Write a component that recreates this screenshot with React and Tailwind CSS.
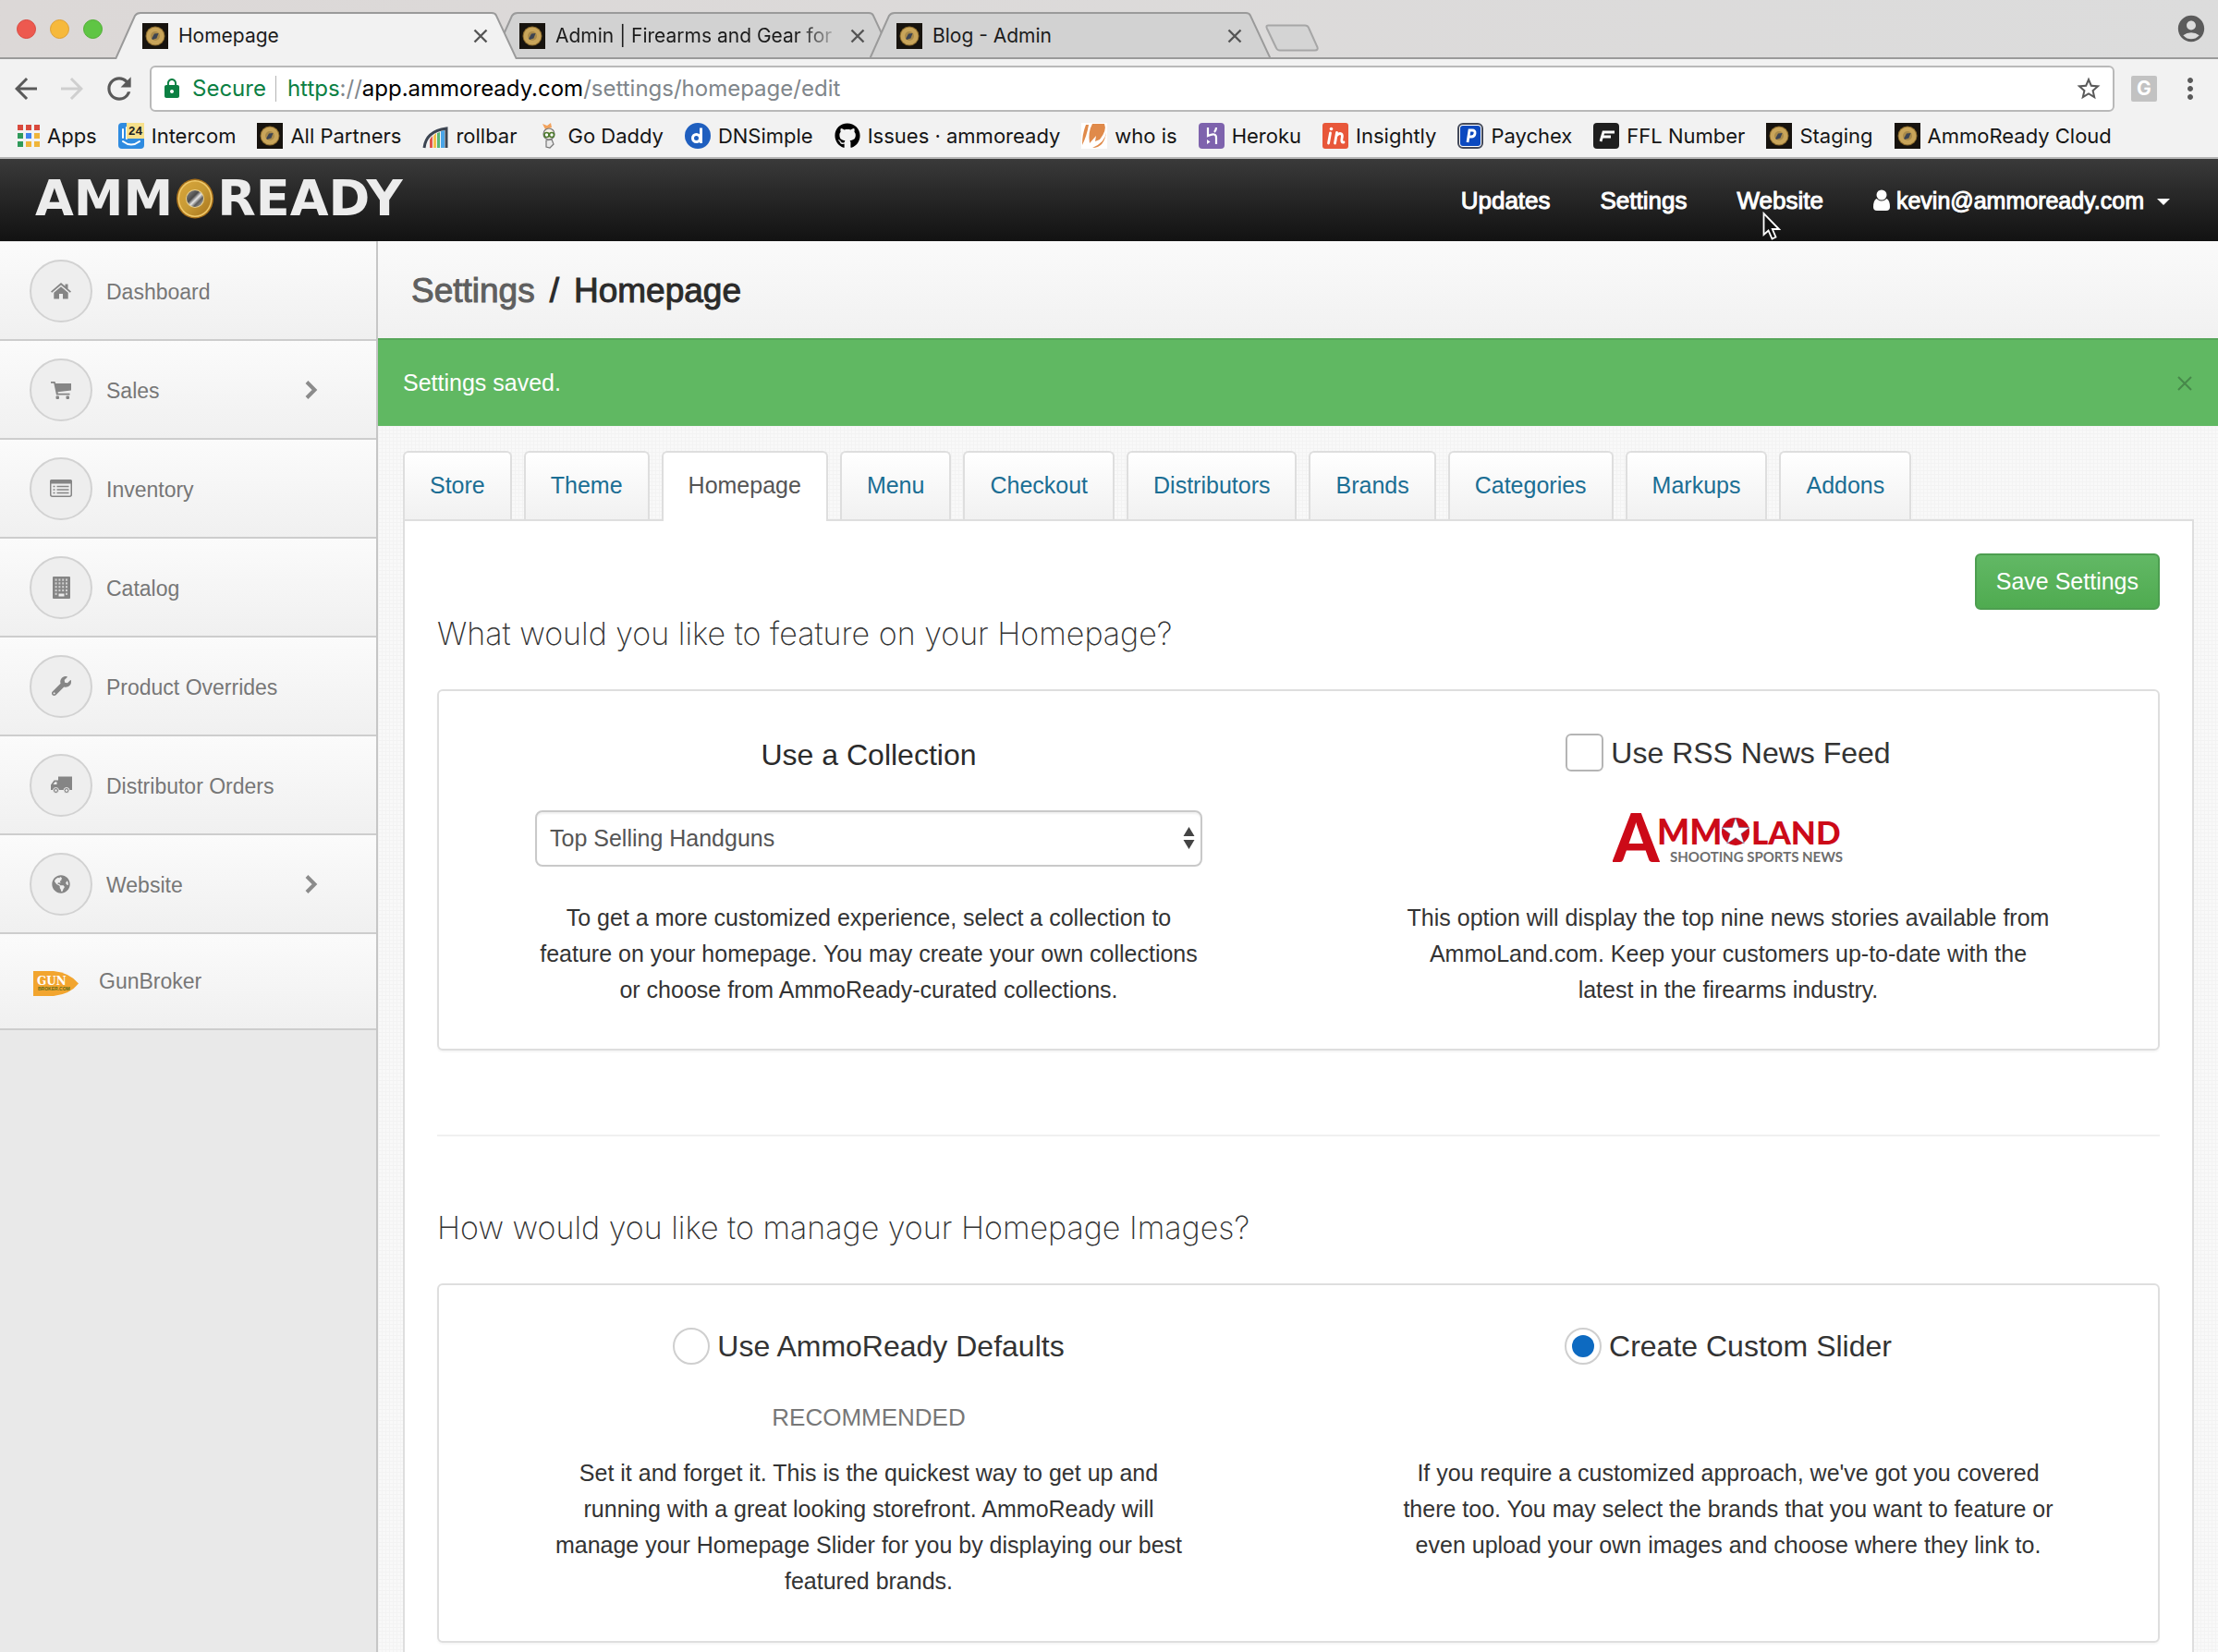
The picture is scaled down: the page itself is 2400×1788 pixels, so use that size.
import React from "react";
import {
  MdArrowBack,
  MdArrowForward,
  MdRefresh,
  MdLock,
  MdStarBorder,
  MdMoreVert,
  MdAccountCircle,
} from "react-icons/md";
import { FaGithub, FaWrench, FaGlobeAmericas } from "react-icons/fa";

/* ---------- shared drawings ---------- */

function Coin({ className }) {
  return (
    <svg viewBox="0 0 40 44" className={className} aria-hidden="true">
      <defs>
        <linearGradient id="gold" x1="0" y1="0" x2="1" y2="1">
          <stop offset="0" stopColor="#d9a53a" />
          <stop offset="0.5" stopColor="#c79a35" />
          <stop offset="1" stopColor="#a8741c" />
        </linearGradient>
        <linearGradient id="steel" x1="0" y1="0" x2="1" y2="1">
          <stop offset="0" stopColor="#8d8d8d" />
          <stop offset="0.4" stopColor="#4a4a4a" />
          <stop offset="0.55" stopColor="#e6e6e6" />
          <stop offset="0.7" stopColor="#5a5a5a" />
          <stop offset="1" stopColor="#c9c9c9" />
        </linearGradient>
      </defs>
      <ellipse cx="20" cy="22" rx="20" ry="21.5" fill="#a8701a" />
      <ellipse cx="20" cy="22" rx="18.5" ry="20" fill="#f0c96a" />
      <ellipse cx="20" cy="22" rx="17" ry="18.5" fill="url(#gold)" />
      <circle cx="20" cy="22" r="10" fill="#e8cf8f" />
      <circle cx="20" cy="22" r="9" fill="url(#steel)" />
    </svg>
  );
}

function CoinFavicon() {
  return (
    <svg viewBox="0 0 28 28" className="size-7 shrink-0" aria-hidden="true">
      <rect width="28" height="28" fill="#17130e" />
      <circle cx="14" cy="14" r="10.5" fill="#8a6a2c" />
      <circle cx="14" cy="14" r="9.5" fill="#c9a55a" />
      <circle cx="14" cy="14" r="5" fill="#a98a4a" />
      <path d="M10.2 16.6 L13 11.6 L17.6 11 L15.4 16.4 L11 18 Z" fill="#3d4452" />
    </svg>
  );
}

/* ---------- browser chrome ---------- */

function BrowserTab({ title, active, overlap, fade }) {
  return (
    <div
      className={
        "relative flex h-[51px] w-[434px] shrink-0 items-center pr-[31px] pl-[29px] " +
        (active ? "z-10 " : "z-0 ") +
        (overlap ? "-ml-[26px]" : "")
      }
    >
      <svg
        viewBox="0 0 434 51"
        preserveAspectRatio="none"
        className="absolute inset-0 size-full"
        aria-hidden="true"
      >
        <path
          d="M0 51 L21 4 Q23 1 27 1 L407 1 Q411 1 412 4 L434 51"
          fill={active ? "#f2f2f2" : "#d2d2d2"}
          stroke="#9a9a9a"
          strokeWidth="2"
        />
        {active ? null : <path d="M0 50 H434" stroke="#9a9a9a" strokeWidth="2" />}
      </svg>
      <button type="button" className="relative flex flex-1 items-center gap-[11px] text-left">
        <CoinFavicon />
        <span
          className={
            "flex-1 whitespace-nowrap text-[21px] leading-7 text-[#1c1c1c] " +
            (fade ? "[mask-image:linear-gradient(90deg,#000_85%,transparent)]" : "")
          }
        >
          {title}
        </span>
      </button>
      <button type="button" aria-label={"Close " + title} className="relative ml-2 size-4 shrink-0">
        <svg viewBox="0 0 16 16" className="size-4">
          <path d="M1.5 1.5 L14.5 14.5 M14.5 1.5 L1.5 14.5" stroke="#555" strokeWidth="2.4" />
        </svg>
      </button>
    </div>
  );
}

function TabStrip() {
  return (
    <div className="flex h-16 items-end border-b-2 border-[#9a9a9a] bg-gradient-to-r from-[#dcd8d7] to-[#dcdcdc]">
      <div className="flex h-full w-[125px] shrink-0 items-center gap-[15px] pl-[18px]">
        <button type="button" aria-label="Close window" className="size-[21px] rounded-full border border-[#d9473f] bg-[#ed594f]" />
        <button type="button" aria-label="Minimize window" className="size-[21px] rounded-full border border-[#dfa033] bg-[#f6b93c]" />
        <button type="button" aria-label="Zoom window" className="size-[21px] rounded-full border border-[#4fae33] bg-[#5fc544]" />
      </div>
      <div className="-mb-[2px] flex">
        <BrowserTab title="Homepage" active />
        <BrowserTab title="Admin | Firearms and Gear for" overlap fade />
        <BrowserTab title="Blog - Admin" overlap />
      </div>
      <button type="button" aria-label="New tab" className="-ml-[6px] mb-[6px] h-[30px] w-[60px] shrink-0">
        <svg viewBox="0 0 60 30" className="h-[30px] w-[60px]">
          <path
            d="M3 1.5 H43 Q46 1.5 47 4 L56.5 25 Q57.5 28.5 54 28.5 H16 Q13 28.5 12 26 L2 5 Q0.500 1.500 3 1.500 Z"
            fill="#d4d4d4"
            stroke="#a6a6a6"
            strokeWidth="2"
          />
        </svg>
      </button>
      <div className="flex h-full flex-1 items-center justify-end pr-[12px]">
        <button type="button" aria-label="Profile">
          <MdAccountCircle className="size-[34px] text-[#5b5b5b]" />
        </button>
      </div>
    </div>
  );
}

function Toolbar() {
  return (
    <div className="flex h-[64px] items-center bg-[#f2f2f2] pl-[10px]">
      <button type="button" aria-label="Back">
        <MdArrowBack className="size-9 text-[#5a5a5a]" />
      </button>
      <button type="button" aria-label="Forward" className="ml-[14px]">
        <MdArrowForward className="size-9 text-[#cfcfcf]" />
      </button>
      <button type="button" aria-label="Reload" className="ml-[14px]">
        <MdRefresh className="size-[38px] text-[#5a5a5a]" />
      </button>
      <div className="ml-[14px] flex h-[50px] flex-1 items-center rounded-md border-2 border-[#b9b9b9] bg-white pl-[10px] text-[24px] leading-8">
        <MdLock className="size-6 text-[#0b8043]" />
        <span className="ml-[10px] text-[#0b8043]">Secure</span>
        <span className="ml-[10px] h-7 w-px bg-[#b5b5b5]" />
        <a href="#url" className="ml-3 flex-1 whitespace-nowrap text-[#80868b]">
          <span className="text-[#0b8043]">https</span>://
          <span className="text-black">app.ammoready.com</span>/settings/homepage/edit
        </a>
        <button type="button" aria-label="Bookmark this page" className="mr-[11px]">
          <MdStarBorder className="size-[30px] text-[#5a5a5a]" />
        </button>
      </div>
      <button
        type="button"
        className="ml-[18px] size-7 rounded-xs bg-[#c2c2c2] text-center text-[21px] leading-7 font-bold text-white"
      >
        G
      </button>
      <button type="button" aria-label="Menu" className="mr-[12px] ml-[18px]">
        <MdMoreVert className="size-9 text-[#5a5a5a]" />
      </button>
    </div>
  );
}

function AppsIcon() {
  const colors = [
    "#d94a3d", "#d94a3d", "#d94a3d",
    "#2f9a5a", "#3f83f0", "#efb53a",
    "#2f9a5a", "#efb53a", "#efb53a",
  ];
  return (
    <svg viewBox="0 0 24 24" className="size-6" aria-hidden="true">
      {colors.map((c, i) => (
        <rect key={i} x={(i % 3) * 9} y={Math.floor(i / 3) * 9} width="6" height="6" fill={c} />
      ))}
    </svg>
  );
}

function IntercomIcon() {
  return (
    <svg viewBox="0 0 28 28" className="size-7" aria-hidden="true">
      <rect width="28" height="28" rx="4" fill="#2f8be0" />
      <path d="M5 7 V16 M9 5 V17 M5 20 Q14 27 23 20" stroke="#fff" strokeWidth="2" fill="none" strokeLinecap="round" />
      <rect x="9" y="0" width="19" height="17" fill="#f7e08a" />
      <text x="18.500" y="13" textAnchor="middle" fontSize="13" fontWeight="700" fill="#222" fontFamily="Liberation Mono, monospace">24</text>
    </svg>
  );
}

function RollbarIcon() {
  return (
    <svg viewBox="0 0 28 28" className="size-7" aria-hidden="true">
      <path d="M8 27 V18 L11 14 V27 Z" fill="#e2574c" />
      <path d="M12 27 V14 L15 11 V27 Z" fill="#f3c04a" />
      <path d="M16 27 V11 L19 10 V27 Z" fill="#58b876" />
      <path d="M20 27 V9 L24 8 V27 Z" fill="#4aa5e8" />
      <path d="M2 27 Q4 9 26 6 V27" fill="none" stroke="#3c4552" strokeWidth="3" />
    </svg>
  );
}

function GoDaddyIcon() {
  return (
    <svg viewBox="0 0 24 28" className="h-7 w-6" aria-hidden="true">
      <path d="M5 1 L10 3 L14 0 L15 5 L8 7 Z" fill="#f2a25c" />
      <circle cx="12" cy="12" r="6" fill="#f5efe6" stroke="#777" strokeWidth="1.200" />
      <circle cx="9.500" cy="13" r="2.500" fill="#fff" stroke="#4d7a2d" strokeWidth="1.600" />
      <circle cx="15" cy="13" r="2.500" fill="#fff" stroke="#4d7a2d" strokeWidth="1.600" />
      <path d="M9 19 L15 18 L17 23 L13 27 L9 26 Z" fill="#e9e9e9" stroke="#777" strokeWidth="1.200" />
    </svg>
  );
}

function DNSimpleIcon() {
  return (
    <svg viewBox="0 0 28 28" className="size-7" aria-hidden="true">
      <circle cx="14" cy="14" r="14" fill="#1f5fbf" />
      <circle cx="12.500" cy="16.500" r="4" fill="none" stroke="#fff" strokeWidth="3" />
      <path d="M17.500 5.500 V22" stroke="#fff" strokeWidth="3" />
    </svg>
  );
}

function WhoIsIcon() {
  return (
    <svg viewBox="0 0 28 28" className="size-7" aria-hidden="true">
      <rect width="28" height="28" fill="#fff" />
      <path d="M5 2 Q1 12 1 24 Q6 14 8 2 Z" fill="#e08a4a" />
      <path d="M12 1 H25 Q28 8 20 18 L15 20 L16 14 L9 22 Q7 10 12 1 Z" fill="#e08a4a" />
      <path d="M27 10 Q26 21 12 27 Q25 27 27 10 Z" fill="#e08a4a" />
    </svg>
  );
}

function HerokuIcon() {
  return (
    <svg viewBox="0 0 28 28" className="size-7" aria-hidden="true">
      <rect width="28" height="28" rx="4" fill="#7e63ad" />
      <path d="M10 5 V14 Q19 10 19 16 V23 M19 5 Q19 8 17 10" stroke="#fff" strokeWidth="2.200" fill="none" />
      <path d="M9 18 L12.500 20.500 L9 23 Z" fill="#fff" />
    </svg>
  );
}

function InsightlyIcon() {
  return (
    <svg viewBox="0 0 28 28" className="size-7" aria-hidden="true">
      <rect width="28" height="28" rx="3" fill="#e8573a" />
      <path d="M8.500 11 L6.500 22 M13.500 22 L15.500 10.500 M15 14 Q18 10.500 20.500 12 Q22 13 21 17 Q20 21.500 23 21" stroke="#fff" strokeWidth="2.800" fill="none" strokeLinecap="round" />
      <circle cx="9.500" cy="6.500" r="1.800" fill="#fff" />
    </svg>
  );
}

function PaychexIcon() {
  return (
    <svg viewBox="0 0 28 28" className="size-7" aria-hidden="true">
      <rect x="1" y="1" width="26" height="26" rx="5" fill="#fff" stroke="#444a5a" strokeWidth="2" />
      <rect x="3" y="3" width="22" height="22" rx="3" fill="#0b49c0" />
      <path d="M11 21 L13 8 H16 Q19.500 8 19 11.500 Q18.500 15 15 15 H12.500" stroke="#fff" strokeWidth="2.800" fill="none" />
    </svg>
  );
}

function FflIcon() {
  return (
    <svg viewBox="0 0 28 28" className="size-7" aria-hidden="true">
      <rect width="28" height="28" rx="4" fill="#1f1f1f" />
      <path d="M8 20 L11 10 H23 M10 15 H19" stroke="#fff" strokeWidth="2.800" fill="none" />
    </svg>
  );
}

const bookmarks = [
  { label: "Apps", icon: <AppsIcon /> },
  { label: "Intercom", icon: <IntercomIcon /> },
  { label: "All Partners", icon: <CoinFavicon /> },
  { label: "rollbar", icon: <RollbarIcon /> },
  { label: "Go Daddy", icon: <GoDaddyIcon /> },
  { label: "DNSimple", icon: <DNSimpleIcon /> },
  { label: "Issues · ammoready", icon: <FaGithub className="size-7 text-black" /> },
  { label: "who is", icon: <WhoIsIcon /> },
  { label: "Heroku", icon: <HerokuIcon /> },
  { label: "Insightly", icon: <InsightlyIcon /> },
  { label: "Paychex", icon: <PaychexIcon /> },
  { label: "FFL Number", icon: <FflIcon /> },
  { label: "Staging", icon: <CoinFavicon /> },
  { label: "AmmoReady Cloud", icon: <CoinFavicon /> },
];

function BookmarksBar() {
  return (
    <nav className="flex h-11 items-center gap-[23px] border-b-2 border-[#b4b4b4] bg-[#f2f2f2] pb-1 pl-[19px]">
      {bookmarks.map((b) => (
        <a
          key={b.label}
          href="#bookmark"
          className="flex shrink-0 items-center gap-2 whitespace-nowrap text-[22px] leading-7 text-[#151515]"
        >
          {b.icon}
          {b.label}
        </a>
      ))}
    </nav>
  );
}

/* ---------- application header ---------- */

function Cursor() {
  return (
    <svg viewBox="0 0 20 31" className="absolute top-[28px] left-7 h-[31px] w-5" aria-hidden="true">
      <path d="M1.500 2 V25 L6.500 20.500 L10.500 29.500 L14.500 27.500 L10.800 19 H18 Z" fill="#111" stroke="#fff" strokeWidth="1.800" />
    </svg>
  );
}

function AppHeader() {
  return (
    <header className="flex h-[89px] items-center justify-between bg-gradient-to-b from-[#3a3a3a] to-[#121212] pr-[52px] pl-[38px] text-white">
      <a href="#home" className="flex items-center gap-1 pb-1 text-[54px] leading-none font-bold text-[#ececec] [font-family:'DejaVu_Sans',sans-serif]">
        <span>AMM</span>
        <Coin className="h-11 w-10" />
        <span>READY</span>
      </a>
      <nav className="flex items-center gap-[54px] text-[26px] leading-8">
        <a href="#updates" className="[-webkit-text-stroke:1px_#fff]">Updates</a>
        <a href="#settings" className="[-webkit-text-stroke:1px_#fff]">Settings</a>
        <a href="#website" className="relative [-webkit-text-stroke:1px_#fff]">
          Website
          <Cursor />
        </a>
        <button type="button" className="flex items-center text-[25px] leading-8">
          <svg viewBox="0 0 18 23" className="mr-[7px] h-[23px] w-[18px]" aria-hidden="true">
            <circle cx="9" cy="6" r="5.500" fill="#fff" />
            <path d="M3.500 10 Q9 15 14.500 10 Q18 12 18 19 Q18 23 14 23 H4 Q0 23 0 19 Q0 12 3.500 10 Z" fill="#fff" />
          </svg>
          <span className="[-webkit-text-stroke:1px_#fff]">kevin@ammoready.com</span>
          <svg viewBox="0 0 14 7" className="mt-1 ml-[14px] h-[7px] w-[14px]" aria-hidden="true">
            <path d="M0 0 H14 L7 7 Z" fill="#fff" />
          </svg>
        </button>
      </nav>
    </header>
  );
}

/* ---------- sidebar ---------- */

function HomeIcon() {
  return (
    <svg viewBox="0 0 22 18" className="h-[18px] w-[22px]" fill="#858585" aria-hidden="true">
      <path d="M11 0 L15.500 3.800 V1.500 H18.500 V6.400 L22 9.400 L20.800 10.800 L11 2.600 L1.200 10.800 L0 9.400 Z" />
      <path d="M11 4.200 L18.700 10.700 V17.500 H13 V12 H9 V17.500 H3.300 V10.700 Z" />
    </svg>
  );
}

function CartIcon() {
  return (
    <svg viewBox="0 0 22 20" className="h-5 w-[22px]" fill="#858585" aria-hidden="true">
      <path d="M0 1 H4.500 L5.200 3 H22 V10.500 L7.500 12.300 L7.800 13.800 H20.500 V15.500 H6 L3.300 2.800 H0 Z" />
      <rect x="5.500" y="16.500" width="3.500" height="3.500" rx="1" />
      <rect x="16.500" y="16.500" width="3.500" height="3.500" rx="1" />
    </svg>
  );
}

function ListIcon() {
  return (
    <svg viewBox="0 0 24 19" className="h-[19px] w-6" aria-hidden="true">
      <rect x="0.750" y="0.750" width="22.500" height="17.500" rx="2" fill="none" stroke="#858585" strokeWidth="1.500" />
      <path d="M0 4.500 V2 Q0 0 2 0 H22 Q24 0 24 2 V4.500 Z" fill="#858585" />
      <path d="M3.500 7.500 H5.500 M3.500 11 H5.500 M3.500 14.500 H5.500 M7.500 7.500 H20.500 M7.500 11 H20.500 M7.500 14.500 H20.500" stroke="#858585" strokeWidth="1.500" />
    </svg>
  );
}

function BuildingIcon() {
  const cells = [];
  for (let r = 0; r < 5; r += 1) {
    for (let c = 0; c < 4; c += 1) {
      if (r === 4 && (c === 1 || c === 2)) continue;
      cells.push(<rect key={r + "-" + c} x={2.600 + c * 3.800} y={2.500 + r * 3.800} width="2" height="2.200" fill="#d0d0d0" />);
    }
  }
  return (
    <svg viewBox="0 0 19 24" className="h-6 w-[19px]" aria-hidden="true">
      <rect width="19" height="24" rx="1" fill="#858585" />
      {cells}
      <rect x="6.500" y="18.500" width="6" height="3" fill="#ececec" />
    </svg>
  );
}

function TruckIcon() {
  return (
    <svg viewBox="0 0 23 19" className="h-[19px] w-[23px]" aria-hidden="true">
      <path d="M8 0.500 H23 V15 H0 V9.500 L3.500 4.500 H8 Z" fill="#858585" />
      <path d="M2.500 9 L4.500 6.200 H6.500 V9 Z" fill="#ececec" />
      <circle cx="5.500" cy="15.500" r="3" fill="#858585" stroke="#ececec" strokeWidth="1" />
      <circle cx="17" cy="15.500" r="3" fill="#858585" stroke="#ececec" strokeWidth="1" />
      <circle cx="5.500" cy="15.500" r="1.300" fill="#ececec" />
      <circle cx="17" cy="15.500" r="1.300" fill="#ececec" />
    </svg>
  );
}

const sideItems = [
  { label: "Dashboard", icon: <HomeIcon /> },
  { label: "Sales", icon: <CartIcon />, more: true },
  { label: "Inventory", icon: <ListIcon /> },
  { label: "Catalog", icon: <BuildingIcon /> },
  { label: "Product Overrides", icon: <FaWrench className="size-[21px] text-[#858585]" /> },
  { label: "Distributor Orders", icon: <TruckIcon /> },
  { label: "Website", icon: <FaGlobeAmericas className="size-5 text-[#858585]" />, more: true },
];

function Sidebar() {
  return (
    <aside className="w-[409px] shrink-0 border-r-2 border-[#c6c6c6] bg-[#e9e9e9] pt-px text-[23px] leading-7 text-[#777]">
      {sideItems.map((item) => (
        <a
          key={item.label}
          href="#section"
          className="flex h-[107px] items-center border-b-2 border-[#cdcdcd] bg-gradient-to-b from-[#fbfbfb] to-[#f0f0f0] pr-[63px] pl-8"
        >
          <span className="flex size-[68px] items-center justify-center rounded-full border-2 border-[#d2d2d2] bg-[#eeeeee]">
            {item.icon}
          </span>
          <span className="ml-[15px] flex-1 pt-[3px]">{item.label}</span>
          {item.more ? (
            <svg viewBox="0 0 14 20" className="h-5 w-[14px]" aria-hidden="true">
              <path d="M2 1.500 L10.500 10 L2 18.500" fill="none" stroke="#8b8b8b" strokeWidth="4" />
            </svg>
          ) : null}
        </a>
      ))}
      <a
        href="#gunbroker"
        className="flex h-[104px] items-center gap-[22px] border-b-2 border-[#cdcdcd] bg-gradient-to-b from-[#fbfbfb] to-[#f0f0f0] pl-9"
      >
        <svg viewBox="0 0 49 27" className="mt-1 h-[27px] w-[49px]" aria-hidden="true">
          <path d="M0 0 H22 Q40 2 49 13.500 Q40 25 22 27 H0 Z" fill="#f2a52f" />
          <text x="4" y="15" fontSize="12" fontWeight="700" fill="#fff" fontFamily="DejaVu Serif, serif">GUN</text>
          <text x="5" y="21" fontSize="5" fontWeight="700" fill="#5b6b1c" fontFamily="Liberation Sans, sans-serif">BROKER.COM</text>
        </svg>
        <span>GunBroker</span>
      </a>
    </aside>
  );
}

/* ---------- settings page ---------- */

const settingTabs = [
  "Store", "Theme", "Homepage", "Menu", "Checkout",
  "Distributors", "Brands", "Categories", "Markups", "Addons",
];

function SettingTabs() {
  return (
    <nav className="flex gap-[13px]">
      {settingTabs.map((name) => (
        <a
          key={name}
          href="#tab"
          className={
            name === "Homepage"
              ? "relative z-10 -mb-[2px] h-[76px] rounded-t-md border-2 border-b-0 border-[#dedede] bg-white px-[27px] pt-4 text-[#555]"
              : "h-[74px] rounded-t-md border-2 border-b-0 border-[#dedede] bg-gradient-to-b from-white to-[#f1f1f1] px-[27px] pt-4 text-[#1b6e94]"
          }
        >
          {name}
        </a>
      ))}
    </nav>
  );
}

function AmmoLandLogo() {
  return (
    <svg viewBox="0 0 250 60" className="h-15 w-[250px]" role="img" aria-label="AmmoLand Shooting Sports News">
      <g fill="#cc0a18" fontFamily="Lato, sans-serif" fontWeight="900">
        <text x="0" y="55" fontSize="72">A</text>
        <text x="48" y="36" fontSize="37">MM</text>
        <text x="150" y="36" fontSize="35">LAND</text>
      </g>
      <circle cx="133" cy="22" r="15" fill="#cc0a18" />
      <path
        d="M133 7 L136.600 17.500 L148 17.700 L139 24.400 L142.200 35 L133 28.700 L123.800 35 L127 24.400 L118 17.700 L129.400 17.500 Z"
        fill="#fff"
        stroke="#44508a"
        strokeWidth="0.500"
      />
      <text x="62" y="55" fontSize="15" fontWeight="700" fill="#6e6e6e" fontFamily="Lato, sans-serif">
        SHOOTING SPORTS NEWS
      </text>
    </svg>
  );
}

function Heading({ children, className }) {
  return (
    <h2 className={"text-[34px] leading-10 font-extralight text-[#333] [font-family:Inter,sans-serif] " + className}>
      {children}
    </h2>
  );
}

const cardClass =
  "grid grid-cols-2 rounded-md border-2 border-[#dedede] bg-white text-center shadow-[0_2px_2px_rgba(0,0,0,0.04)]";

const radioClass =
  "flex size-10 appearance-none items-center justify-center rounded-full border-2 border-[#cfcfcf] bg-white checked:before:size-6 checked:before:rounded-full checked:before:bg-[#0d6ac1] checked:before:content-['']";

function FeatureCard() {
  return (
    <section className={cardClass + " mt-[40px] h-[391px]"}>
      <div className="px-26 pt-[49px]">
        <label htmlFor="collection" className="block text-[32px] leading-10 text-[#2b2b2b]">
          Use a Collection
        </label>
        <div className="relative mt-10">
          <select
            id="collection"
            className="h-[61px] w-full appearance-none rounded-lg border-2 border-[#c9c9c9] bg-white pl-[14px] text-[25px] text-[#555] shadow-[inset_0_2px_2px_rgba(0,0,0,0.06)]"
          >
            <option>Top Selling Handguns</option>
          </select>
          <svg viewBox="0 0 13 24" className="pointer-events-none absolute top-[18px] right-2 h-6 w-[13px]" aria-hidden="true">
            <path d="M6.500 0 L12.500 10 H0.500 Z M6.500 24 L12.500 14 H0.500 Z" fill="#444" />
          </svg>
        </div>
        <p className="mt-9">
          To get a more customized experience, select a collection to feature on your homepage. You may create your own
          collections or choose from AmmoReady-curated collections.
        </p>
      </div>
      <div className="px-26 pt-[46px]">
        <label className="flex items-center justify-center gap-2 text-[32px] leading-10">
          <input type="checkbox" className="size-[41px] appearance-none rounded-md border-2 border-[#b5b5b5] bg-white" />
          Use RSS News Feed
        </label>
        <div className="mt-[43px] flex h-15 justify-center">
          <AmmoLandLogo />
        </div>
        <p className="mt-9 px-2">
          This option will display the top nine news stories available from AmmoLand.com. Keep your customers up-to-date
          with the latest in the firearms industry.
        </p>
      </div>
    </section>
  );
}

function ImagesCard() {
  return (
    <section className={cardClass + " mt-[40px] h-[389px]"}>
      <div className="px-26 pt-[46px]">
        <label className="flex items-center justify-center gap-2 text-[32px] leading-10">
          <input type="radio" name="slider" className={radioClass} />
          Use AmmoReady Defaults
        </label>
        <p className="mt-[37px] h-10 text-[26px] leading-10 text-[#777]">RECOMMENDED</p>
        <p className="mt-[21px] px-2">
          Set it and forget it. This is the quickest way to get up and running with a great looking storefront.
          AmmoReady will manage your Homepage Slider for you by displaying our best featured brands.
        </p>
      </div>
      <div className="px-26 pt-[46px]">
        <label className="flex items-center justify-center gap-2 text-[32px] leading-10">
          <input type="radio" name="slider" defaultChecked className={radioClass} />
          Create Custom Slider
        </label>
        <p className="mt-[98px] px-2">
          If you require a customized approach, we've got you covered there too. You may select the brands that you want
          to feature or even upload your own images and choose where they link to.
        </p>
      </div>
    </section>
  );
}

function Main() {
  return (
    <main className="flex min-w-0 flex-1 flex-col bg-[#f9f9f9] bg-[linear-gradient(#f3f3f3_1px,transparent_1px),linear-gradient(90deg,#f3f3f3_1px,transparent_1px)] bg-[size:4px_4px]">
      <h1 className="flex h-[105px] shrink-0 items-center gap-4 bg-gradient-to-b from-[#fafafa] to-[#f1f1f1] pt-[3px] pl-9 text-[37px] leading-10 text-[#2b2b2b]">
        <a href="#settings" className="text-[#5f5f5f] [-webkit-text-stroke:1px_#5f5f5f]">Settings</a>
        <span className="[-webkit-text-stroke:1px_#2b2b2b]">/</span>
        <span className="[-webkit-text-stroke:1px_#2b2b2b]">Homepage</span>
      </h1>
      <div role="status" className="flex h-[95px] shrink-0 items-center justify-between border-t-2 border-[#57a65a] bg-[#60b862] pr-[28px] pl-[27px] text-white">
        Settings saved.
        <button type="button" aria-label="Dismiss">
          <svg viewBox="0 0 16 16" className="size-4">
            <path d="M1 1 L15 15 M15 1 L1 15" stroke="#47884a" strokeWidth="2" />
          </svg>
        </button>
      </div>
      <div className="flex flex-1 flex-col pt-[27px] pr-[26px] pl-[27px]">
        <SettingTabs />
        <div className="flex-1 border-2 border-b-0 border-[#dedede] bg-white px-[35px] pt-[35px]">
          <div className="flex justify-end">
            <button
              type="button"
              className="h-[61px] rounded-md border-2 border-[#4d9e50] bg-gradient-to-b from-[#62b865] to-[#4fab50] px-[21px] text-white"
            >
              Save Settings
            </button>
          </div>
          <Heading className="mt-[6px]">What would you like to feature on your Homepage?</Heading>
          <FeatureCard />
          <hr className="mt-[91px] border-t-2 border-[#f0f0f0]" />
          <Heading className="mt-[79px]">How would you like to manage your Homepage Images?</Heading>
          <ImagesCard />
        </div>
      </div>
    </main>
  );
}

export default function App() {
  return (
    <div className="flex h-screen flex-col overflow-hidden bg-white">
      <div className="[font-family:Inter,sans-serif]">
        <TabStrip />
        <Toolbar />
        <BookmarksBar />
      </div>
      <div className="flex min-h-0 flex-1 flex-col text-[25px] leading-[39px] text-[#333] [font-family:'Liberation_Sans',Arial,sans-serif]">
        <AppHeader />
        <div className="flex min-h-0 flex-1">
          <Sidebar />
          <Main />
        </div>
      </div>
    </div>
  );
}
